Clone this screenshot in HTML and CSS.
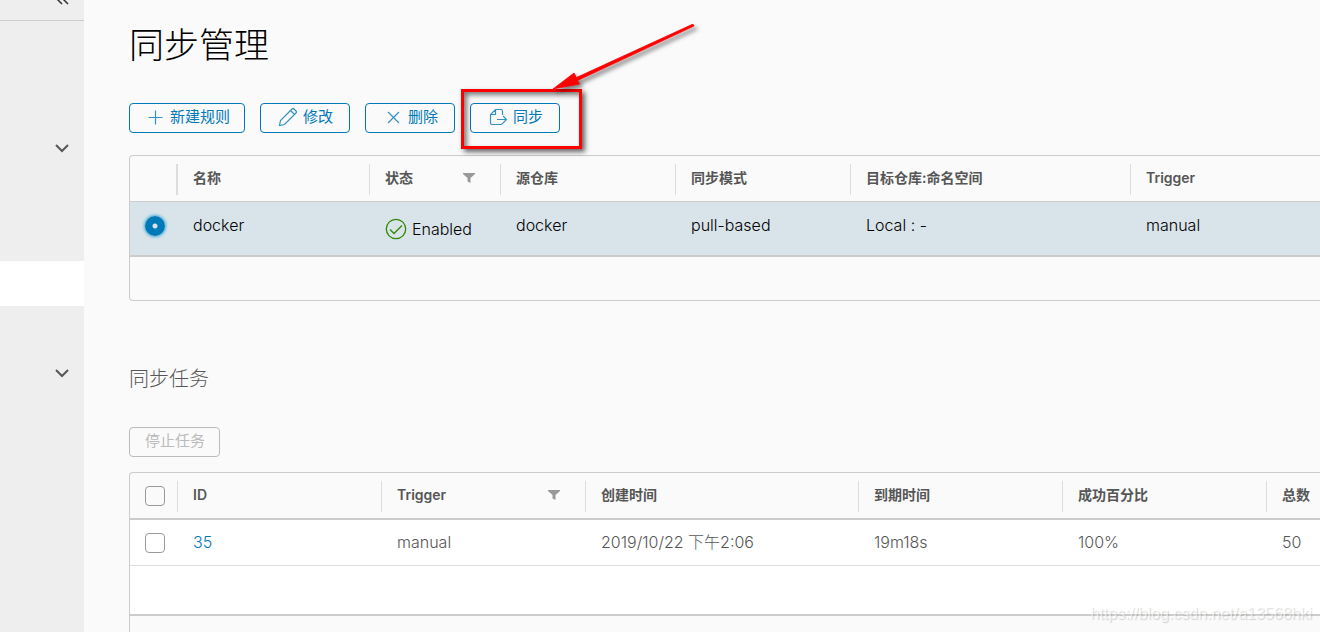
FILE: index.html
```html
<!DOCTYPE html>
<html lang="zh-CN">
<head>
<meta charset="utf-8">
<title>同步管理</title>
<link rel="stylesheet" href="styles.css">
</head>
<body>
<div class="app">
  <aside class="sidebar">
    <button class="collapse" aria-label="收起">
      <svg width="16" height="16" viewBox="0 0 16 16"><path d="M8 2L2 8l6 6M14 2L8 8l6 6"/></svg>
    </button>
    <nav class="nav">
      <button class="nav-item" aria-label="展开"><svg width="14" height="9" viewBox="0 0 14 9"><path d="M1 1l6 6 6-6"/></svg></button>
      <a class="nav-item" href="#"></a>
      <a class="nav-item" href="#"></a>
      <a class="nav-item active" href="#"></a>
      <a class="nav-item" href="#"></a>
      <button class="nav-item" aria-label="展开"><svg width="14" height="9" viewBox="0 0 14 9"><path d="M1 1l6 6 6-6"/></svg></button>
    </nav>
  </aside>
  <main class="content">
    <h1 class="title">同步管理</h1>
    <div class="toolbar">
      <button class="btn"><svg width="20" height="20" viewBox="0 0 20 20"><path d="M10.500 3.500v14M3.500 10.500h14"/></svg>新建规则</button>
      <button class="btn"><svg width="20" height="20" viewBox="0 0 20 20"><path d="M1.500 18.500l1-5L14 2q1-1 2 0l2 2q1 1 0 2L6.500 17.500zM12.500 3.500l4 4"/></svg>修改</button>
      <button class="btn"><svg width="20" height="20" viewBox="0 0 20 20"><path d="M5 5l11 11M16 5l-11 11"/></svg>删除</button>
      <div class="marked">
        <button class="btn"><svg width="20" height="20" viewBox="0 0 20 20"><path d="M14.500 8V4q0-1.500-1.500-1.500H7.500L2.500 7.500V16q0 1.500 1.500 1.500h9q1.500 0 1.500-1.500M7.500 2.500v5h-5M9 12.500h9M15 9l3.500 3.500L15 16"/></svg>同步</button>
        <span class="frame"></span>
        <svg class="arrow" width="150" height="80" viewBox="0 0 150 80"><path d="M3 68l21-16 2.500 4.500L142 3.500q2-.5 2 1.500L27.500 59.500l2 3.500z"/></svg>
      </div>
    </div>

    <table class="grid rules">
      <colgroup><col class="w-pick"><col class="w-name"><col class="w-status"><col class="w-repo"><col class="w-repo"><col class="w-target"><col></colgroup>
      <thead><tr>
        <th></th>
        <th><div class="head thick">名称</div></th>
        <th><div class="head">状态<svg class="filter" width="12" height="10" viewBox="0 0 12 10"><path d="M0 0h12v1L7.500 5v5l-3-1.500V5L0 1z"/></svg></div></th>
        <th><div class="head">源仓库</div></th>
        <th><div class="head">同步模式</div></th>
        <th><div class="head">目标仓库:命名空间</div></th>
        <th><div class="head">Trigger</div></th>
      </tr></thead>
      <tbody><tr class="selected">
        <td class="pick"><input type="radio" class="radio" name="rule" aria-label="docker" checked></td>
        <td>docker</td>
        <td class="status"><span class="state"><svg width="22" height="22" viewBox="0 0 22 22"><circle cx="11" cy="11" r="9.700"/><path d="M5 11.500l4 4 8-8"/></svg>Enabled</span></td>
        <td>docker</td>
        <td>pull-based</td>
        <td>Local : -</td>
        <td>manual</td>
      </tr></tbody>
      <tfoot><tr><td colspan="7"></td></tr></tfoot>
    </table>

    <h2 class="subtitle">同步任务</h2>
    <div class="toolbar jobs-bar"><button class="btn" disabled>停止任务</button></div>

    <table class="grid jobs">
      <colgroup><col class="w-pick"><col class="w-job"><col class="w-job"><col class="w-time"><col class="w-job"><col class="w-job"><col></colgroup>
      <thead><tr>
        <th class="pick"><input type="checkbox" class="check" aria-label="全选"></th>
        <th><div class="head">ID</div></th>
        <th><div class="head">Trigger<svg class="filter" width="12" height="10" viewBox="0 0 12 10"><path d="M0 0h12v1L7.500 5v5l-3-1.500V5L0 1z"/></svg></div></th>
        <th><div class="head">创建时间</div></th>
        <th><div class="head">到期时间</div></th>
        <th><div class="head">成功百分比</div></th>
        <th><div class="head">总数</div></th>
      </tr></thead>
      <tbody>
        <tr class="job">
          <td class="pick"><input type="checkbox" class="check" aria-label="35"></td>
          <td><a class="link" href="#">35</a></td>
          <td>manual</td>
          <td>2019/10/22 下午2:06</td>
          <td>19m18s</td>
          <td>100%</td>
          <td>50</td>
        </tr>
        <tr class="spacer"><td colspan="7"></td></tr>
      </tbody>
      <tfoot><tr><td colspan="7"></td></tr></tfoot>
    </table>
  </main>
  <span class="watermark">https://blog.csdn.net/a13568hki</span>
</div>
</body>
</html>
```
FILE: styles.css
```css
* { box-sizing: border-box; }
body {
  margin: 0;
  background: #fafafa;
  color: #565656;
  font: 300 16px/24px Inter, "Noto Sans CJK SC", sans-serif;
}
button, input { font: inherit; margin: 0; }
svg { fill: none; stroke: currentColor; flex: none; }

.app { position: relative; display: flex; height: 100vh; overflow: hidden; }

.sidebar { width: 84px; flex: none; background: #eee; }
.collapse {
  display: flex;
  justify-content: flex-end;
  align-items: flex-start;
  width: 100%;
  height: 21px;
  padding: 0 14px 0 0;
  border: 0;
  border-bottom: 1px solid #ccc;
  background: none;
  color: #333;
}
.collapse svg { margin-top: -10px; stroke-width: 1.5; }
.nav { padding-top: 105px; }
.nav-item {
  display: flex;
  align-items: center;
  justify-content: flex-end;
  width: 100%;
  height: 45px;
  padding: 0 15px 0 0;
  border: 0;
  background: none;
  color: #565656;
  stroke-width: 2;
}
.nav-item.active { background: #fff; }

.content { flex: 1; min-width: 0; padding: 21px 0 0 45px; }
.title { margin: 0 0 34px; color: #000; font-size: 35px; font-weight: 300; line-height: 48px; }

.toolbar { display: flex; gap: 15px; margin-bottom: 22px; }
.btn {
  display: flex;
  align-items: center;
  justify-content: center;
  gap: 5px;
  min-width: 90px;
  height: 30px;
  padding: 0 14px 2px 15px;
  border: 1px solid #0079b8;
  border-radius: 4px;
  background: transparent;
  color: #0079b8;
  font-size: 15px;
  font-weight: 400;
  white-space: nowrap;
}
.btn svg { stroke-width: 1.2; opacity: .8; }
.btn:disabled { border-color: #bbb; color: #bbb; }
.marked { position: relative; }
.frame {
  position: absolute;
  inset: -14px -22px -16px -9px;
  border: 3px solid #f00;
  box-shadow: 3px 3px 5px rgba(0, 0, 0, .6), inset 3px 3px 5px rgba(0, 0, 0, .5);
  pointer-events: none;
}
.arrow {
  position: absolute;
  left: 80px;
  bottom: 32px;
  overflow: visible;
  fill: #f00;
  stroke: #f00;
  stroke-width: .8;
  filter: drop-shadow(3px 3px 2px rgba(0, 0, 0, .5));
  pointer-events: none;
}

.grid {
  width: 100%;
  min-width: 1180px;
  table-layout: fixed;
  border: 1px solid #ccc;
  border-right: 0;
  border-radius: 4px 0 0 4px;
  border-spacing: 0;
}
.grid th { padding: 8px 0 6px; border-bottom: 1px solid #ccc; text-align: left; }
.grid td { padding: 11px 0 11px 16px; vertical-align: top; }
.grid .pick { padding-left: 15px; }
.head {
  display: flex;
  align-items: center;
  justify-content: space-between;
  height: 31px;
  padding: 0 25px 3px 15px;
  border-left: 1px solid #ddd;
  font-size: 14px;
  font-weight: 600;
  white-space: nowrap;
}
.head.thick { box-shadow: -1px 0 #ddd; }
.filter { fill: #999; stroke: none; }
.w-pick { width: 47px; }
.w-name { width: 192px; }
.w-status { width: 131px; }
.w-repo { width: 175px; }
.w-target { width: 280px; }
.w-job { width: 204px; }
.w-time { width: 273px; }

.selected td { height: 53px; background: #d9e4ea; color: #000; }
.selected .status { padding-top: 15px; }
.state { display: flex; align-items: center; gap: 5px; }
.state svg { color: #318700; stroke-width: 1.3; }
.grid tfoot td { height: 45px; padding: 0; border-top: 2px solid #ccc; }

.radio, .check { display: block; appearance: none; width: 20px; height: 20px; }
.radio {
  margin-top: 3px;
  border-radius: 50%;
  background: radial-gradient(circle, #d9e4ea 2px, #0079b8 3px);
  box-shadow: 0 0 3px 1px #49afd9;
}
.check { border: 1px solid #999; border-radius: 4px; background: #fff; }
th .check { background: #fafafa; }

.subtitle { margin: 64px 0 34px; font-size: 20px; font-weight: 300; line-height: 28px; }
.jobs-bar { margin-bottom: 15px; }
.jobs th { border-bottom-width: 2px; }
.jobs th.pick { padding-top: 6px; }
.jobs .job td { padding: 10px 0 11px 16px; border-bottom: 1px solid #ddd; background: #fff; }
.jobs .job .pick { padding-left: 15px; }
.jobs td .check { margin-top: 3px; }
.jobs .spacer td { height: 48px; padding: 0; background: #fff; }
.link { color: #0079b8; text-decoration: none; }

.watermark {
  position: absolute;
  right: 8px;
  bottom: 6px;
  color: rgba(255, 255, 255, .6);
  font: 16px/24px "Liberation Sans", sans-serif;
  text-shadow: 1px 1px 1px rgba(0, 0, 0, .16);
}
```
